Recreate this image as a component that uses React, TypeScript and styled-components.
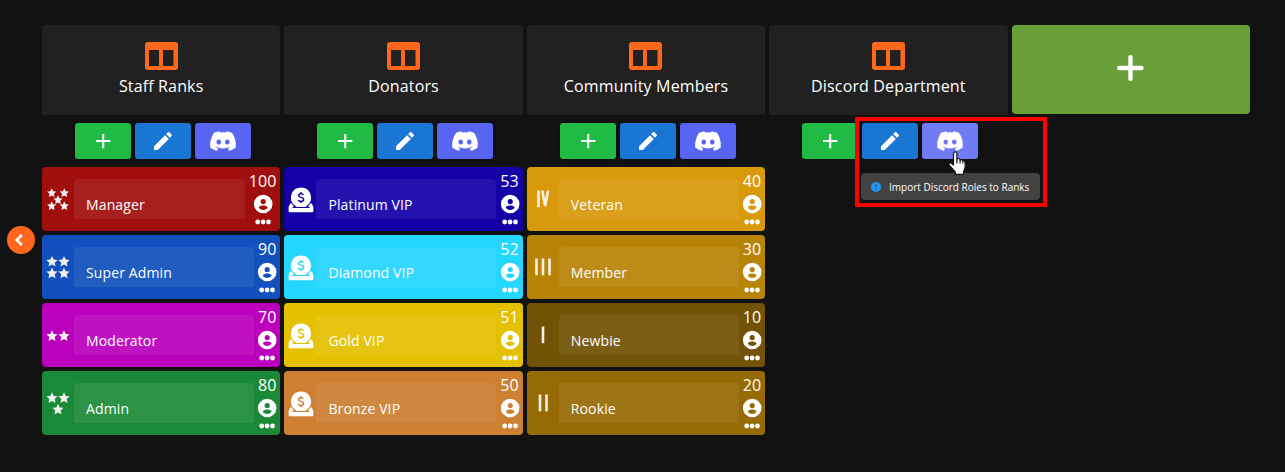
import React from "react";
import styled, { createGlobalStyle } from "styled-components";
import { FaDiscord } from "react-icons/fa";
import { MdEdit } from "react-icons/md";

const GlobalStyle = createGlobalStyle`
  *, *::before, *::after { box-sizing: border-box; }
  body {
    margin: 0;
    background: #121212;
    color: #fff;
    font-family: "Open Sans", sans-serif;
    overflow: hidden;
  }
  svg { display: block; flex: none; }
`;

const Page = styled.main`
  position: relative;
  height: 472px;
  padding: 25px 35px 0 42px;
`;

const BackButton = styled.button`
  position: absolute;
  left: 7px;
  top: 226px;
  width: 28px;
  height: 28px;
  padding: 0 4px 0 0;
  border: 0;
  border-radius: 50%;
  background: #ff671d;
  color: #fff;
  display: flex;
  align-items: center;
  justify-content: center;
`;

const Board = styled.div`
  display: grid;
  grid-template-columns: repeat(5, 1fr);
  gap: 4px;
  align-items: start;
`;

const Column = styled.section`
  display: flex;
  flex-direction: column;
  min-width: 0;
`;

const ColumnHeader = styled.header`
  height: 90px;
  padding-top: 17px;
  border-radius: 4px 4px 0 0;
  background: #212121;
  display: flex;
  flex-direction: column;
  align-items: center;
  gap: 4px;
  font-size: 16px;
  line-height: 24px;
  letter-spacing: 0.15px;
`;

const AddColumn = styled.button`
  height: 89px;
  padding: 0 1px 3px 0;
  border: 0;
  border-radius: 4px;
  background: #689f38;
  color: #fff;
  display: flex;
  align-items: center;
  justify-content: center;
`;

const Actions = styled.div`
  display: flex;
  justify-content: center;
  gap: 4px;
  padding: 8px 0 8px 3.4px;
`;

const ActionButton = styled.button<{ $color: string }>`
  width: 56px;
  height: 36px;
  padding: 0;
  border: 0;
  border-radius: 3px;
  background: ${(p) => p.$color};
  color: #fff;
  display: flex;
  align-items: center;
  justify-content: center;
  box-shadow: 0 1px 4px rgba(0, 0, 0, 0.3);
`;

const RankList = styled.div`
  display: flex;
  flex-direction: column;
  gap: 4px;
`;

const RankCard = styled.article<{ $color: string }>`
  height: 64px;
  padding-right: 4px;
  border-radius: 4px;
  background: ${(p) => p.$color};
  display: flex;
  align-items: center;
`;

const Badge = styled.div`
  width: 32px;
  flex: none;
  display: flex;
  justify-content: center;
`;

const NameField = styled.div`
  flex: 1;
  height: 40px;
  padding: 16px 12px 0;
  border-radius: 4px 4px 0 0;
  background: rgba(255, 255, 255, 0.07);
  font-size: 14px;
  line-height: 20px;
  letter-spacing: 0.13px;
`;

const RankInfo = styled.div`
  height: 64px;
  margin-left: 4px;
  padding-top: 2px;
  display: flex;
  flex-direction: column;
  align-items: center;
  font-size: 16px;
  line-height: 24px;
  letter-spacing: 0.1px;
`;

const AvatarIcon = styled.svg`
  margin: 1px -1px 5px;
`;

const Callout = styled.div`
  position: absolute;
  left: 855px;
  top: 117px;
  width: 192px;
  height: 90px;
  border: 4px solid #f00;
  pointer-events: none;
`;

const Tooltip = styled.div`
  position: absolute;
  left: 861px;
  top: 173px;
  width: 179px;
  height: 27px;
  padding: 0 10px;
  border-radius: 4px;
  background: #424242;
  display: flex;
  align-items: center;
  gap: 8px;
  font-size: 10px;
  line-height: 14px;
  white-space: nowrap;
`;

const Pointer = styled.svg`
  position: absolute;
  left: 948px;
  top: 151px;
`;

const ColumnsIcon = () => (
  <svg width="33" height="28" viewBox="0 0 33 28" fill="#ff671d" fillRule="evenodd">
    <path d="M3 0H30a3 3 0 0 1 3 3V25a3 3 0 0 1-3 3H3a3 3 0 0 1-3-3V3a3 3 0 0 1 3-3ZM4 8V24H14V8ZM18 8V24H28.5V8Z" />
  </svg>
);

const PlusIcon = () => (
  <svg width="28" height="28" viewBox="0 0 28 28" stroke="#fff" strokeWidth="4.4" strokeLinecap="round">
    <path d="M14.5 3.2V24.8M3.2 14H25.5" />
  </svg>
);

const AddIcon = () => (
  <svg width="16" height="16" viewBox="0 0 16 16" stroke="#fff" strokeWidth="2.1">
    <path d="M8.2 1V15.3M1 8H15.4" />
  </svg>
);

const ChevronIcon = () => (
  <svg width="10" height="14" viewBox="0 0 10 14" fill="none" stroke="#fff" strokeWidth="2.6">
    <path d="M7.8 2 2.8 7l5 5" />
  </svg>
);

const Avatar = () => (
  <AvatarIcon width="20" height="20" viewBox="0 0 20 20" fill="#fff" fillRule="evenodd">
    <path d="M10.2 .7a9.3 9.3 0 1 1 0 18.6a9.3 9.3 0 0 1 0-18.6ZM10.2 5a2.6 2.6 0 1 0 0 5.2a2.6 2.6 0 0 0 0-5.2ZM5.8 13.2C6.4 15 8.2 16 10.2 16s3.8-1 4.4-2.8C14 12.1 12.2 11.5 10.2 11.5s-3.8.6-4.4 1.7Z" />
  </AvatarIcon>
);

const Coin = () => (
  <svg width="26" height="26" viewBox="0 0 26 26" fill="#fff">
    <path d="M2.2 16.500h1.600a11.400 11.400 0 0 0 2.300 3.500H4.400v.9h17.200V20h-1.700a11.400 11.400 0 0 0 2.300-3.500h1.600L25.400 20v4a1.200 1.200 0 0 1-1.200 1.200H1.800A1.200 1.200 0 0 1 .6 24v-4Z" />
    <path d="M13 .4a10.100 10.100 0 0 1 5.400 18.600L17.500 20h-9L7.600 19A10.100 10.100 0 0 1 13 .4Z" />
    <path
      d="M15.500 7.800C15.100 7 14.200 6.700 13 6.700c-1.500 0-2.500.7-2.500 1.800 0 2.700 5.100 1 5.100 3.900 0 1.200-1.100 1.900-2.600 1.900-1.300 0-2.300-.5-2.600-1.400M13 5.100v1.600M13 14.300v1.600"
      fill="none"
      stroke="var(--card)"
      strokeWidth="1.45"
    />
  </svg>
);

const CoinBadge = styled.div<{ $color: string }>`
  --card: ${(p) => p.$color};
  margin: 1px 0 0 1px;
`;

const STAR = "M0-5.8 1.7-2.1 5.6-1.7 2.7 1 3.5 4.9 0 2.9-3.5 4.9-2.7 1-5.6-1.7-1.7-2.1Z";
const STARS: Record<number, number[][]> = {
  2: [[10, 18], [22, 18]],
  3: [[10, 12], [22, 12], [16, 23.5]],
  4: [[10, 11.7], [22, 11.7], [10, 23.3], [22, 23.3]],
  5: [[9.7, 11], [22.3, 11], [16, 18], [9.7, 24], [22.3, 24]],
};

const Stars = ({ count }: { count: number }) => (
  <svg width="32" height="34" viewBox="0 0 32 34" fill="#f0f0f0">
    {STARS[count].map(([x, y], i) => (
      <path key={i} d={STAR} transform={`translate(${x} ${y}) scale(${count === 5 ? 0.82 : 1})`} />
    ))}
  </svg>
);

const NUMERALS: Record<string, string> = {
  I: "M16 8.5V25.2",
  II: "M13 8.5V25.2M19.5 8.5V25.2",
  III: "M9.5 8.5V25.2M16 8.5V25.2M22.5 8.5V25.2",
  IV: "M11.5 8.5V25.2M15.3 8.5L18.2 24L21.1 8.5",
};

const Numeral = ({ value }: { value: string }) => (
  <svg width="32" height="34" viewBox="0 0 32 34" fill="none" stroke="#f5f1e6" strokeWidth="2.6">
    <path d={NUMERALS[value]} />
  </svg>
);

const Dots = () => (
  <svg width="18" height="6" viewBox="0 0 18 6" fill="#fff">
    <circle cx="3.7" cy="3" r="2.4" />
    <circle cx="9.1" cy="3" r="2.4" />
    <circle cx="14.5" cy="3" r="2.4" />
  </svg>
);

const Info = () => (
  <svg width="10" height="10" viewBox="0 0 10 10">
    <circle cx="5" cy="5" r="5" fill="#2196f3" />
    <path d="M5 2.2v3.3M5 6.7v1.2" stroke="#424242" strokeWidth="1.1" />
  </svg>
);

type Rank = { name: string; level: number; color: string; stars?: number; numeral?: string };
type Group = { title: string; ranks: Rank[] };

const groups: Group[] = [
  {
    title: "Staff Ranks",
    ranks: [
      { name: "Manager", level: 100, color: "#a10e0e", stars: 5 },
      { name: "Super Admin", level: 90, color: "#1150bd", stars: 4 },
      { name: "Moderator", level: 70, color: "#ba00bd", stars: 2 },
      { name: "Admin", level: 80, color: "#1b8a38", stars: 3 },
    ],
  },
  {
    title: "Donators",
    ranks: [
      { name: "Platinum VIP", level: 53, color: "#1500a8" },
      { name: "Diamond VIP", level: 52, color: "#25d6ff" },
      { name: "Gold VIP", level: 51, color: "#e3c100" },
      { name: "Bronze VIP", level: 50, color: "#cd7f32" },
    ],
  },
  {
    title: "Community Members",
    ranks: [
      { name: "Veteran", level: 40, color: "#d8990b", numeral: "IV" },
      { name: "Member", level: 30, color: "#b88407", numeral: "III" },
      { name: "Newbie", level: 10, color: "#725205", numeral: "I" },
      { name: "Rookie", level: 20, color: "#966b05", numeral: "II" },
    ],
  },
  { title: "Discord Department", ranks: [] },
];

const RankBadge = ({ rank }: { rank: Rank }) => {
  if (rank.stars) return <Stars count={rank.stars} />;
  if (rank.numeral) return <Numeral value={rank.numeral} />;
  return <CoinBadge $color={rank.color}><Coin /></CoinBadge>;
};

export default function App() {
  return (
    <Page>
      <GlobalStyle />
      <Board>
        {groups.map((group, i) => (
          <Column key={group.title}>
            <ColumnHeader>
              <ColumnsIcon />
              {group.title}
            </ColumnHeader>
            <Actions>
              <ActionButton $color="#21ba45"><AddIcon /></ActionButton>
              <ActionButton $color="#1976d2"><MdEdit size={24} /></ActionButton>
              <ActionButton $color={i === 3 ? "#717bf4" : "#5865f2"}><FaDiscord size={28} /></ActionButton>
            </Actions>
            <RankList>
              {group.ranks.map((rank) => (
                <RankCard key={rank.name} $color={rank.color}>
                  <Badge><RankBadge rank={rank} /></Badge>
                  <NameField>{rank.name}</NameField>
                  <RankInfo>
                    {rank.level}
                    <Avatar />
                    <Dots />
                  </RankInfo>
                </RankCard>
              ))}
            </RankList>
          </Column>
        ))}
        <AddColumn><PlusIcon /></AddColumn>
      </Board>
      <BackButton><ChevronIcon /></BackButton>
      <Callout />
      <Tooltip><Info />Import Discord Roles to Ranks</Tooltip>
      <Pointer width="18" height="25" viewBox="0 0 18 25" fill="#fff" stroke="#15151f" strokeWidth="1.2" strokeLinejoin="round">
        <path d="M5.5 2.5a1.7 1.7 0 0 1 3.4 0V9l.4-1.2c1.4-.7 2.6 0 2.8 1.2 1.2-.6 2.4-.1 2.7 1 1.3-.4 2.3.4 2.3 1.8V16c0 2-1.3 3.3-1.6 5v2.3H7.3V21L1.4 14.3c-1.2-1.6.7-3.2 2.2-2l1.9 1.8Z" />
        <path d="M8.9 8.5v4M12.1 9v3.5M14.8 10.5v2" fill="none" />
      </Pointer>
    </Page>
  );
}
